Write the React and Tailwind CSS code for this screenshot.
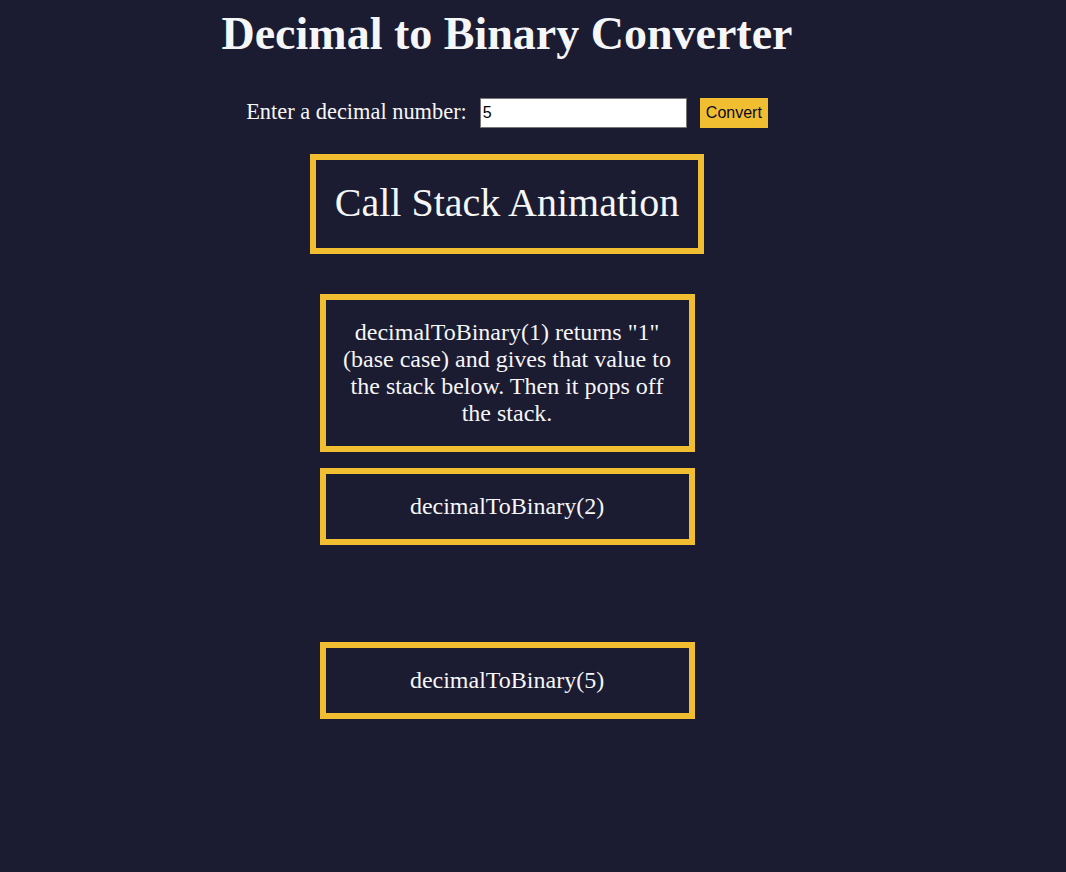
import { useState } from "react";

const serif = "font-['Liberation_Serif','Times_New_Roman',serif]";
const sans = "font-['Liberation_Sans',Arial,sans-serif]";

const StackFrame = ({ children, className = "" }) => (
    <div
        className={`w-[375px] border-[6px] border-[#f1be32] px-[14px] py-[19px] text-center text-[24px] leading-[27px] ${className}`}
    >
        {children}
    </div>
);

const App = () => {
    const [value, setValue] = useState("5");

    return (
        <div className={`min-h-[872px] w-full bg-[#1b1b32] text-[#f5f6f7] ${serif}`}>
            <div className="flex w-[1014px] flex-col items-center">
                {/* Title */}
                <h1 className="mt-[7px] text-[46px] font-bold leading-[53px]">
                    Decimal to Binary Converter
                </h1>

                {/* Input row */}
                <div className="mt-[38px] flex h-[30px] items-center">
                    <label htmlFor="number-input" className="pb-[3px] text-[22.4px] leading-[25px]">
                        Enter a decimal number:
                    </label>
                    <input
                        id="number-input"
                        type="number"
                        value={value}
                        onChange={(e) => setValue(e.target.value)}
                        className={`ml-[13px] h-[30px] w-[207px] border border-[#767676] bg-white px-[2px] text-[16px] text-black outline-none ${sans}`}
                    />
                    <button
                        className={`ml-[13px] h-[30px] w-[68px] bg-[#f1be32] text-[16px] text-[#0a0a23] ${sans}`}
                    >
                        Convert
                    </button>
                </div>

                {/* Animation heading */}
                <div className="mt-[26px] flex h-[100px] w-[394px] items-center justify-center border-[6px] border-[#f1be32] pb-[2px] text-[40px] leading-[46px]">
                    Call Stack Animation
                </div>

                {/* Call stack */}
                <StackFrame className="mt-[40px]">
                    decimalToBinary(1) returns "1" (base case) and gives that value to the stack below. Then it pops off the stack.
                </StackFrame>
                <StackFrame className="mt-[16px]">decimalToBinary(2)</StackFrame>
                <StackFrame className="mt-[97px]">decimalToBinary(5)</StackFrame>
            </div>
        </div>
    );
};

export default App;
